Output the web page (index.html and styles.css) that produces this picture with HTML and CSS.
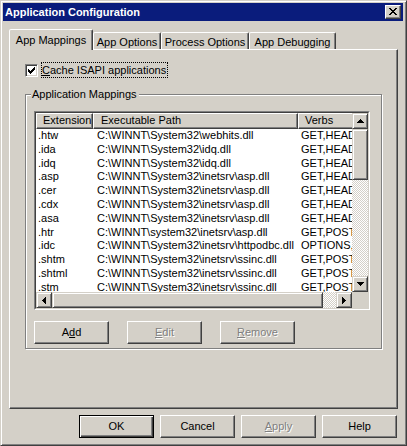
FILE: index.html
```html
<!DOCTYPE html>
<html>
<head>
<meta charset="utf-8">
<title>Application Configuration</title>
<link rel="stylesheet" href="styles.css">
</head>
<body>
<div class="window">
  <div class="titlebar">
    <span class="title">Application Configuration</span>
    <span class="close"><svg width="8" height="7" viewBox="0 0 8 7" shape-rendering="crispEdges"><path fill="#000" d="M0 0h2v1H0z M6 0h2v1H6z M1 1h2v1H1z M5 1h2v1H5z M2 2h4v1H2z M3 3h2v1H3z M2 4h4v1H2z M1 5h2v1H1z M5 5h2v1H5z M0 6h2v1H0z M6 6h2v1H6z"/></svg></span>
  </div>
  <div class="tabs">
    <div class="tab selected w1">App Mappings</div>
    <div class="tab w2">App Options</div>
    <div class="tab w3">Process Options</div>
    <div class="tab w4">App Debugging</div>
  </div>
  <div class="panel">
    <div class="checkrow">
      <span class="checkbox"><svg width="7" height="7" viewBox="0 0 7 7" shape-rendering="crispEdges"><path fill="#000" d="M0 2h1v3H0z M1 3h1v3H1z M2 4h1v3H2z M3 3h1v3H3z M4 2h1v3H4z M5 1h1v3H5z M6 0h1v3H6z"/></svg></span>
      <span class="focus"><u>C</u>ache ISAPI applications</span>
    </div>
    <div class="group">
      <span class="legend">Application Mappings</span>
      <div class="listview">
        <div class="lv-inner">
          <div class="lv-main">
            <div class="lv-content">
              <div class="header">
                <div class="hcell c1">Extension</div>
                <div class="hcell c2">Executable Path</div>
                <div class="hcell c3">Verbs</div>
              </div>
              <div class="row"><span class="cell c1">.htw</span><span class="cell c2">C:\WINNT\System32\webhits.dll</span><span class="cell c3">GET,HEAD</span></div>
              <div class="row"><span class="cell c1">.ida</span><span class="cell c2">C:\WINNT\System32\idq.dll</span><span class="cell c3">GET,HEAD</span></div>
              <div class="row"><span class="cell c1">.idq</span><span class="cell c2">C:\WINNT\System32\idq.dll</span><span class="cell c3">GET,HEAD</span></div>
              <div class="row"><span class="cell c1">.asp</span><span class="cell c2">C:\WINNT\System32\inetsrv\asp.dll</span><span class="cell c3">GET,HEAD</span></div>
              <div class="row"><span class="cell c1">.cer</span><span class="cell c2">C:\WINNT\System32\inetsrv\asp.dll</span><span class="cell c3">GET,HEAD</span></div>
              <div class="row"><span class="cell c1">.cdx</span><span class="cell c2">C:\WINNT\System32\inetsrv\asp.dll</span><span class="cell c3">GET,HEAD</span></div>
              <div class="row"><span class="cell c1">.asa</span><span class="cell c2">C:\WINNT\System32\inetsrv\asp.dll</span><span class="cell c3">GET,HEAD</span></div>
              <div class="row"><span class="cell c1">.htr</span><span class="cell c2">C:\WINNT\system32\inetsrv\asp.dll</span><span class="cell c3">GET,POST</span></div>
              <div class="row"><span class="cell c1">.idc</span><span class="cell c2">C:\WINNT\System32\inetsrv\httpodbc.dll</span><span class="cell c3">OPTIONS,GET,HEAD,POST</span></div>
              <div class="row"><span class="cell c1">.shtm</span><span class="cell c2">C:\WINNT\System32\inetsrv\ssinc.dll</span><span class="cell c3">GET,POST</span></div>
              <div class="row"><span class="cell c1">.shtml</span><span class="cell c2">C:\WINNT\System32\inetsrv\ssinc.dll</span><span class="cell c3">GET,POST</span></div>
              <div class="row"><span class="cell c1">.stm</span><span class="cell c2">C:\WINNT\System32\inetsrv\ssinc.dll</span><span class="cell c3">GET,POST</span></div>
            </div>
            <div class="vscroll">
              <div class="sbtn"><svg width="7" height="4" viewBox="0 0 7 4" shape-rendering="crispEdges"><path fill="#000" d="M3 0h1v1H3z M2 1h3v1H2z M1 2h5v1H1z M0 3h7v1H0z"/></svg></div>
              <div class="sbtn vthumb"></div>
              <div class="track"></div>
              <div class="sbtn"><svg width="7" height="4" viewBox="0 0 7 4" shape-rendering="crispEdges"><path fill="#000" d="M0 0h7v1H0z M1 1h5v1H1z M2 2h3v1H2z M3 3h1v1H3z"/></svg></div>
            </div>
          </div>
          <div class="hrow">
            <div class="hscroll">
              <div class="sbtn"><svg width="4" height="7" viewBox="0 0 4 7" shape-rendering="crispEdges"><path fill="#000" d="M0 3h1v1H0z M1 2h1v3H1z M2 1h1v5H2z M3 0h1v7H3z"/></svg></div>
              <div class="sbtn hthumb"></div>
              <div class="track"></div>
              <div class="sbtn"><svg width="4" height="7" viewBox="0 0 4 7" shape-rendering="crispEdges"><path fill="#000" d="M0 0h1v7H0z M1 1h1v5H1z M2 2h1v3H2z M3 3h1v1H3z"/></svg></div>
            </div>
            <div class="corner"></div>
          </div>
        </div>
      </div>
      <div class="gbuttons">
        <div class="btn">A<u>d</u>d</div>
        <div class="btn disabled"><u>E</u>dit</div>
        <div class="btn disabled"><u>R</u>emove</div>
      </div>
    </div>
  </div>
  <div class="footer">
    <div class="btn default">OK</div>
    <div class="btn">Cancel</div>
    <div class="btn disabled"><u>A</u>pply</div>
    <div class="btn">Help</div>
  </div>
</div>
</body>
</html>
```
FILE: styles.css
```css
* { box-sizing: border-box; }
html, body { margin: 0; padding: 0; }
body {
  background: #d4d0c8;
  font-family: "Liberation Sans", Arial, sans-serif;
  font-size: 11px;
  color: #000;
}
.window {
  width: 407px;
  height: 446px;
  background: #d4d0c8;
  border: 1px solid;
  border-color: #d4d0c8 #404040 #404040 #d4d0c8;
  box-shadow: inset 1px 1px 0 #fff, inset -1px -1px 0 #808080;
  padding: 2px 3px 0 2px;
  display: flex;
  flex-direction: column;
}
.titlebar {
  height: 18px;
  flex: none;
  background: #0a1c7c;
  display: flex;
  align-items: center;
  justify-content: space-between;
  padding: 0 2px;
}
.title { color: #fff; font-weight: bold; font-size: 11px; line-height: 14px; }
.close {
  width: 16px;
  height: 14px;
  background: #d4d0c8;
  border: 1px solid;
  border-color: #fff #404040 #404040 #fff;
  box-shadow: inset -1px -1px 0 #808080;
  display: flex;
  align-items: center;
  justify-content: center;
  padding: 0 1px 1px 0;
}
.close svg { display: block; }
.tabs {
  display: flex;
  align-items: flex-end;
  height: 21px;
  flex: none;
  margin: 8px 0 -1px 6px;
}
.tab {
  height: 17px;
  margin-bottom: 1px;
  border: 1px solid;
  border-bottom: none;
  border-color: #fff #404040 transparent #fff;
  box-shadow: inset -1px 0 0 #808080;
  border-radius: 2px 2px 0 0;
  background: #d4d0c8;
  display: flex;
  align-items: center;
  justify-content: center;
  padding-top: 1px;
  white-space: nowrap;
}
.tab.selected {
  height: 21px;
  margin-bottom: 0;
  padding-top: 0;
  padding-bottom: 1px;
  position: relative;
  z-index: 1;
}
.w1 { width: 84px; }
.w2 { width: 68px; }
.w3 { width: 88px; }
.w4 { width: 87px; }
.panel {
  margin: 0 5px 0 6px;
  height: 360px;
  flex: none;
  border: 1px solid;
  border-color: #fff #404040 #404040 #fff;
  box-shadow: inset -1px -1px 0 #808080;
  padding: 12px 0 0 15px;
  display: flex;
  flex-direction: column;
  align-items: flex-start;
}
.checkrow { display: flex; align-items: center; height: 16px; }
.checkbox {
  width: 13px;
  height: 13px;
  border: 1px solid;
  border-color: #808080 #fff #fff #808080;
  box-shadow: inset 1px 1px 0 #404040, inset -1px -1px 0 #d4d0c8;
  background: #fff;
  display: flex;
  align-items: center;
  justify-content: center;
  margin-right: 3px;
}
.checkbox svg { display: block; }
.focus {
  border: 1px dotted #000;
  line-height: 14px;
  padding-right: 1px;
  white-space: nowrap;
}
.group {
  position: relative;
  margin-top: 16px;
  width: 357px;
  height: 255px;
  border: 1px solid #808080;
  box-shadow: inset 1px 1px 0 #fff, 1px 1px 0 #fff;
  padding: 16px 0 0 8px;
}
.legend {
  position: absolute;
  top: -8px;
  left: 5px;
  padding: 0 2px 0 1px;
  background: #d4d0c8;
  line-height: 14px;
  white-space: nowrap;
}
.listview {
  width: 336px;
  height: 199px;
  border: 1px solid;
  border-color: #808080 #fff #fff #808080;
}
.lv-inner {
  height: 100%;
  border: 1px solid;
  border-color: #404040 #d4d0c8 #d4d0c8 #404040;
  display: flex;
  flex-direction: column;
}
.lv-main { display: flex; height: 179px; flex: none; }
.lv-content {
  width: 316px;
  flex: none;
  overflow: hidden;
  background: #fff;
}
.header { display: flex; height: 16px; width: 362px; }
.hcell {
  flex: none;
  height: 16px;
  border: 1px solid;
  border-color: #fff #404040 #404040 #fff;
  box-shadow: inset -1px -1px 0 #808080;
  background: #d4d0c8;
  line-height: 13px;
  padding-left: 6px;
  white-space: nowrap;
}
.hcell.c2 { padding-left: 7px; }
.c1 { width: 57px; }
.c2 { width: 205px; }
.c3 { width: 100px; }
.row {
  display: flex;
  width: 362px;
  height: 13.8px;
  line-height: 13.8px;
  white-space: nowrap;
}
.cell { flex: none; overflow: hidden; }
.cell.c1 { padding-left: 2px; }
.cell.c2 { padding-left: 4px; }
.cell.c3 { padding-left: 3px; }
.vscroll {
  width: 16px;
  flex: none;
  display: flex;
  flex-direction: column;
}
.sbtn {
  flex: none;
  width: 16px;
  height: 16px;
  background: #d4d0c8;
  border: 1px solid;
  border-color: #d4d0c8 #404040 #404040 #d4d0c8;
  box-shadow: inset 1px 1px 0 #fff, inset -1px -1px 0 #808080;
  display: flex;
  align-items: center;
  justify-content: center;
}
.sbtn svg { display: block; }
.vthumb { height: 51px; }
.track {
  flex: 1;
  background-color: #fff;
  background-image: conic-gradient(#fff 25%, #d4d0c8 0 50%, #fff 0 75%, #d4d0c8 0);
  background-size: 2px 2px;
}
.hrow { display: flex; height: 16px; flex: none; }
.hscroll { width: 316px; display: flex; flex: none; }
.hthumb { width: 271px; }
.corner { width: 16px; background: #d4d0c8; }
.gbuttons {
  display: flex;
  gap: 18px;
  margin-top: 11px;
}
.btn {
  width: 75px;
  height: 23px;
  flex: none;
  border: 1px solid;
  border-color: #fff #404040 #404040 #fff;
  box-shadow: inset -1px -1px 0 #808080;
  background: #d4d0c8;
  display: flex;
  align-items: center;
  justify-content: center;
  padding-bottom: 1px;
  white-space: nowrap;
}
.btn.default {
  border-color: #000;
  box-shadow: inset 1px 1px 0 #fff, inset -1px -1px 0 #404040, inset -2px -2px 0 #808080;
}
.disabled { color: #808080; text-shadow: 1px 1px 0 #fff; }
.footer {
  display: flex;
  justify-content: flex-end;
  gap: 6px;
  margin: 6px 6px 0 0;
}
```
